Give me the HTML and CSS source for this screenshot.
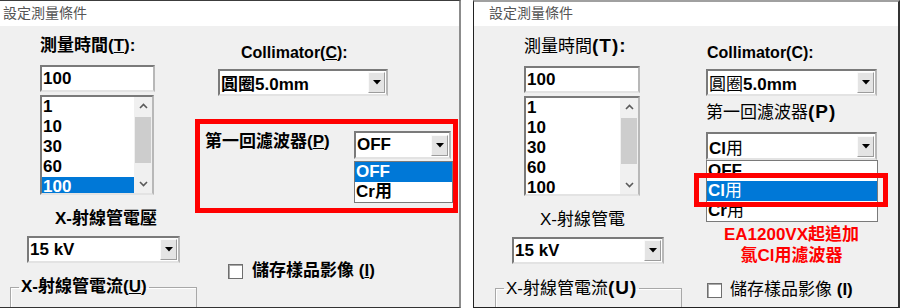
FILE: index.html
```html
<!DOCTYPE html>
<html lang="zh-Hant">
<head>
    <meta charset="UTF-8">
    <meta name="viewport" content="width=device-width, initial-scale=1.0">
    <title>設定測量條件</title>
    <link rel="stylesheet" href="styles.css">
</head>
<body>
    <div class="screens">
        <!-- old dialog: bold UI font -->
        <section class="panel panel-bold">
            <div class="titlebar">設定測量條件</div>
            <div class="dialog">
                <div class="col-left">
                    <div class="label time-label">測量時間(<u>T</u>):</div>
                    <div class="textbox">100</div>
                    <div class="listbox">
                        <ul class="list-items">
                            <li>1</li>
                            <li>10</li>
                            <li>30</li>
                            <li>60</li>
                            <li class="selected">100</li>
                        </ul>
                        <div class="scrollbar">
                            <span class="scroll-arrow"><svg width="9" height="6" viewBox="0 0 9 6"><path d="M1 5l3.5-3.5L8 5" fill="none" stroke="#5a5a5a" stroke-width="1.6"/></svg></span>
                            <span class="scroll-thumb"></span>
                            <span class="scroll-track"></span>
                            <span class="scroll-arrow"><svg width="9" height="6" viewBox="0 0 9 6"><path d="M1 1l3.5 3.5L8 1" fill="none" stroke="#5a5a5a" stroke-width="1.6"/></svg></span>
                        </div>
                    </div>
                    <div class="label center-label">X-射線管電壓</div>
                    <div class="combo combo-kv">
                        <span class="combo-value">15 kV</span>
                        <span class="combo-btn"><svg width="8" height="5" viewBox="0 0 8 5"><path d="M0 0h8L4 4.5z"/></svg></span>
                    </div>
                    <fieldset class="group"><legend>X-射線管電流(<u>U</u>)</legend></fieldset>
                </div>
                <div class="col-right">
                    <div class="coll-label">Collimator(<u>C</u>):</div>
                    <div class="combo combo-coll">
                        <span class="combo-value">圓圈5.0mm</span>
                        <span class="combo-btn"><svg width="8" height="5" viewBox="0 0 8 5"><path d="M0 0h8L4 4.5z"/></svg></span>
                    </div>
                    <div class="highlight-box">
                        <div class="label filter-label">第一回濾波器(<u>P</u>)</div>
                        <div class="filter-pick">
                            <div class="combo combo-filter">
                                <span class="combo-value">OFF</span>
                                <span class="combo-btn"><svg width="8" height="5" viewBox="0 0 8 5"><path d="M0 0h8L4 4.5z"/></svg></span>
                            </div>
                            <ul class="droplist">
                                <li class="selected">OFF</li>
                                <li>Cr用</li>
                            </ul>
                        </div>
                    </div>
                    <div class="check-row">
                        <span class="checkbox"></span>
                        <span>儲存樣品影像 (<u>I</u>)</span>
                    </div>
                </div>
            </div>
        </section>

        <!-- new dialog: regular UI font -->
        <section class="panel panel-plain">
            <div class="titlebar">設定測量條件</div>
            <div class="dialog">
                <div class="col-left">
                    <div class="label time-label">測量時間<span class="paren">(T):</span></div>
                    <div class="textbox">100</div>
                    <div class="listbox">
                        <ul class="list-items">
                            <li>1</li>
                            <li>10</li>
                            <li>30</li>
                            <li>60</li>
                            <li>100</li>
                        </ul>
                        <div class="scrollbar">
                            <span class="scroll-arrow"><svg width="9" height="6" viewBox="0 0 9 6"><path d="M1 5l3.5-3.5L8 5" fill="none" stroke="#5a5a5a" stroke-width="1.6"/></svg></span>
                            <span class="scroll-thumb"></span>
                            <span class="scroll-track"></span>
                            <span class="scroll-arrow"><svg width="9" height="6" viewBox="0 0 9 6"><path d="M1 1l3.5 3.5L8 1" fill="none" stroke="#5a5a5a" stroke-width="1.6"/></svg></span>
                        </div>
                    </div>
                    <div class="label center-label">X-射線管電</div>
                    <div class="combo combo-kv">
                        <span class="combo-value">15 kV</span>
                        <span class="combo-btn"><svg width="8" height="5" viewBox="0 0 8 5"><path d="M0 0h8L4 4.5z"/></svg></span>
                    </div>
                    <fieldset class="group"><legend>X-射線管電流<span class="paren">(U)</span></legend></fieldset>
                </div>
                <div class="col-right">
                    <div class="coll-label">Collimator(C):</div>
                    <div class="combo combo-coll">
                        <span class="combo-value"><span class="han">圓圈</span>5.0mm</span>
                        <span class="combo-btn"><svg width="8" height="5" viewBox="0 0 8 5"><path d="M0 0h8L4 4.5z"/></svg></span>
                    </div>
                    <div class="label filter-label">第一回濾波器<span class="paren">(P)</span></div>
                    <div class="combo combo-filter">
                        <span class="combo-value">Cl<span class="han">用</span></span>
                        <span class="combo-btn"><svg width="8" height="5" viewBox="0 0 8 5"><path d="M0 0h8L4 4.5z"/></svg></span>
                    </div>
                    <ul class="droplist">
                        <li>OFF</li>
                        <li class="selected">Cl<span class="han">用</span></li>
                        <li>Cr<span class="han">用</span></li>
                        <span class="red-mark"></span>
                    </ul>
                    <div class="note">EA1200VX起追加<br>氯Cl用濾波器</div>
                    <div class="check-row">
                        <span class="checkbox"></span>
                        <span>儲存樣品影像 <b>(I)</b></span>
                    </div>
                </div>
            </div>
        </section>
    </div>
</body>
</html>
```

FILE: styles.css
```css
:root {
    --face: #f0f0f0;
    --select: #0078d7;
    --alert: #ff0000;
    --edge-dark: #7a7a7a;
    --edge-mid: #b8b8b8;
    --edge-light: #e3e3e3;
}

body {
    margin: 0;
    background: #ffffff;
    font-family: "Liberation Sans", "Noto Sans CJK TC", sans-serif;
    color: #000000;
}

.screens {
    display: flex;
    gap: 12px;
    width: 900px;
    height: 308px;
}

.panel {
    box-sizing: border-box;
    height: 308px;
    background: var(--face);
    display: flex;
    flex-direction: column;
    overflow: hidden;
}

.panel-bold {
    width: 461px;
    border-top: 1px solid #3c3c3c;
    border-right: 2px solid #8c8c8c;
    border-bottom: 1px solid #333333;
    font-weight: bold;
}

.panel-plain {
    width: 427px;
    border-top: 2px solid #a0a0a0;
    border-left: 1px solid #222222;
    border-right: 2px solid #333333;
    border-bottom: 1px solid #222222;
}

.titlebar {
    flex: none;
    box-sizing: border-box;
    height: 25px;
    padding: 1px 0 0 3px;
    background: #ffffff;
    font-family: "Noto Sans CJK TC", sans-serif;
    font-size: 14px;
    font-weight: normal;
    line-height: 20px;
    color: #555555;
}

.panel-plain .titlebar {
    height: 24px;
    padding: 0 0 0 15px;
}

.dialog {
    display: flex;
    flex: 1;
    padding-left: 10px;
}

.panel-plain .dialog {
    padding-left: 21px;
}

.col-left,
.col-right {
    flex: none;
    display: flex;
    flex-direction: column;
    align-items: flex-start;
}

.col-left {
    width: 185px;
}

.col-right {
    width: 263px;
}

.panel-plain .col-right {
    width: 172px;
    margin-left: 26px;
}

.label {
    font-size: 17px;
    line-height: 20px;
    white-space: nowrap;
}

/* the newer dialog draws its latin brackets larger */
.paren {
    font-size: 19px;
    font-weight: bold;
    letter-spacing: 1px;
}

.time-label {
    margin: 10px 0 0 30px;
}

.panel-plain .time-label {
    margin-left: 29px;
}

.textbox,
.listbox,
.combo {
    box-sizing: border-box;
    border: 2px solid;
    border-color: var(--edge-dark) var(--edge-mid) var(--edge-light) var(--edge-dark);
    background: #ffffff;
    font-size: 17px;
    font-weight: bold;
}

.textbox {
    margin: 9px 0 0 30px;
    width: 115px;
    height: 27px;
    padding-left: 1px;
    line-height: 23px;
}

.panel-plain .textbox {
    margin-left: 29px;
    width: 116px;
}

.listbox {
    display: flex;
    margin: 3px 0 0 30px;
    width: 114px;
    height: 100px;
    overflow: hidden;
}

.panel-plain .listbox {
    margin-left: 29px;
    width: 116px;
}

.list-items {
    flex: 1;
    list-style: none;
    margin: 0;
    padding: 0;
    line-height: 20px;
}

.list-items li {
    padding-left: 1px;
}

.list-items .selected {
    background: var(--select);
    color: #ffffff;
}

.scrollbar {
    width: 18px;
    display: flex;
    flex-direction: column;
    background: var(--face);
}

.scroll-arrow {
    height: 18px;
    display: flex;
    align-items: center;
    justify-content: center;
}

.scroll-thumb {
    height: 46px;
    margin: 2px 1px 0;
    background: #cdcdcd;
}

.scroll-track {
    flex: 1;
}

.center-label {
    margin: 14px 0 0 45px;
}

.combo {
    display: flex;
    align-items: center;
    height: 27px;
    padding-left: 1px;
}

.combo-value {
    flex: 1;
    white-space: nowrap;
    overflow: hidden;
}

.combo-btn {
    box-sizing: border-box;
    width: 17px;
    height: 21px;
    margin-right: 1px;
    display: flex;
    align-items: center;
    justify-content: center;
    background: #e4e4e4;
    border: 1px solid;
    border-color: #fafafa #9c9c9c #9c9c9c #fafafa;
}

.combo-kv {
    margin: 7px 0 0 17px;
    width: 153px;
}

.panel-plain .combo-kv {
    width: 152px;
}

.group {
    box-sizing: border-box;
    min-width: 0;
    width: 187px;
    height: 60px;
    margin: 14px 0 0;
    padding: 0 0 0 8px;
    border: 1px solid #a8a8a8;
    box-shadow: inset 1px 1px 0 #ffffff;
}

.group legend {
    padding: 0 2px;
    font-size: 17px;
    line-height: 20px;
}

.coll-label {
    margin: 18px 0 0 46px;
    font-size: 16px;
    font-weight: bold;
    line-height: 18px;
    white-space: nowrap;
}

.panel-plain .coll-label {
    margin-left: 1px;
}

.combo-coll {
    margin: 7px 0 0 23px;
    width: 170px;
}

.panel-plain .combo-coll {
    margin-left: 0;
    width: 171px;
}

.highlight-box {
    box-sizing: border-box;
    display: flex;
    margin-top: 23px;
    width: 263px;
    height: 94px;
    padding: 7px 0 5px 5px;
    border: 5px solid var(--alert);
}

.highlight-box .filter-label {
    margin-top: 1px;
}

.filter-pick {
    margin-left: auto;
    width: 99px;
    display: flex;
    flex-direction: column;
}

.combo-filter {
    width: 97px;
    height: 28px;
}

.droplist {
    list-style: none;
    margin: 2px 0 0;
    padding: 0;
    border: 1px solid var(--edge-dark);
    background: #ffffff;
    font-size: 17px;
    font-weight: bold;
    line-height: 20px;
}

.droplist li {
    padding-left: 1px;
}

.droplist .selected {
    background: var(--select);
    color: #ffffff;
}

.panel-plain .filter-label {
    margin-top: 6px;
}

.panel-plain .combo-filter {
    margin-top: 9px;
    width: 171px;
}

.panel-plain .droplist {
    position: relative;
    box-sizing: border-box;
    margin-top: 0;
    width: 172px;
    height: 62px;
}

.han {
    font-weight: normal;
}

.red-mark {
    position: absolute;
    left: -13px;
    top: 12px;
    box-sizing: border-box;
    width: 194px;
    height: 34px;
    border: 5px solid var(--alert);
}

.note {
    width: 171px;
    margin-top: 2px;
    text-align: center;
    color: var(--alert);
    font-size: 17px;
    font-weight: bold;
    line-height: 21px;
    white-space: nowrap;
}

.check-row {
    display: flex;
    align-items: center;
    gap: 9px;
    margin: 48px 0 0 33px;
    font-size: 17px;
    line-height: 20px;
    white-space: nowrap;
}

.panel-plain .check-row {
    gap: 8px;
    margin: 14px 0 0 1px;
}

.checkbox {
    flex: none;
    box-sizing: border-box;
    width: 15px;
    height: 15px;
    background: #ffffff;
    border: 1px solid #6e6e6e;
    box-shadow: inset 1px 1px 0 #a8a8a8;
}
```
